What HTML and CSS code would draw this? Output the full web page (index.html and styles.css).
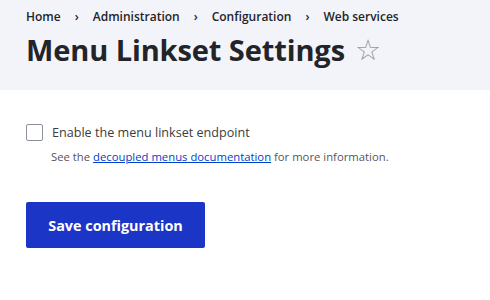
FILE: index.html
```html
<!DOCTYPE html>
<html>
<head>
<meta charset="utf-8">
<link rel="stylesheet" href="styles.css">
</head>
<body>
<header class="page-header">
  <nav class="breadcrumb">
    <a href="#">Home</a><span class="sep">›</span>
    <a href="#">Administration</a><span class="sep">›</span>
    <a href="#">Configuration</a><span class="sep">›</span>
    <a href="#">Web services</a>
  </nav>
  <h1 class="title">Menu Linkset Settings <span class="star">☆</span></h1>
</header>
<main class="content">
  <div class="form-item">
    <label class="check-row"><span class="checkbox"></span><span class="label-text">Enable the menu linkset endpoint</span></label>
    <div class="description">See the <a href="#">decoupled menus documentation</a> for more information.</div>
  </div>
  <button class="button">Save configuration</button>
</main>
</body>
</html>
```
FILE: styles.css
```css
html, body { margin: 0; padding: 0; background: #fff; }
body { font-family: "Open Sans", "Noto Sans", sans-serif; color: #232429; }
.page-header { background: #f3f4f9; height: 90px; padding: 9px 26px 0; box-sizing: border-box; }
.breadcrumb { font-size: 12px; font-weight: 600; display: flex; align-items: center; line-height: 16px; }
.breadcrumb a { color: #232429; text-decoration: none; }
.breadcrumb .sep { margin: 0 14px; font-size: 12px; }
.title { margin: 6px 0 0; font-size: 29px; font-weight: 700; line-height: 36px; letter-spacing: -0.1px; }
.star { font-weight: 400; color: #999; font-size: 29px; vertical-align: 1px; margin-left: 3px; }
.content { padding: 34px 26px 0; }
.check-row { display: flex; align-items: center; gap: 9px; font-size: 12.6px; color: #3b3c40; }
.checkbox { width: 15px; height: 15px; border: 1px solid #8e929c; border-radius: 2px; }
.description { margin: 8px 0 0 25px; font-size: 11.3px; color: #55565b; }
.description a { color: #003ecc; }
.button { margin-top: 38px; width: 179px; height: 46px; border: 0; border-radius: 2px; background: #1b36c6; color: #fff; font-family: inherit; font-size: 14.4px; font-weight: 700; }
```
